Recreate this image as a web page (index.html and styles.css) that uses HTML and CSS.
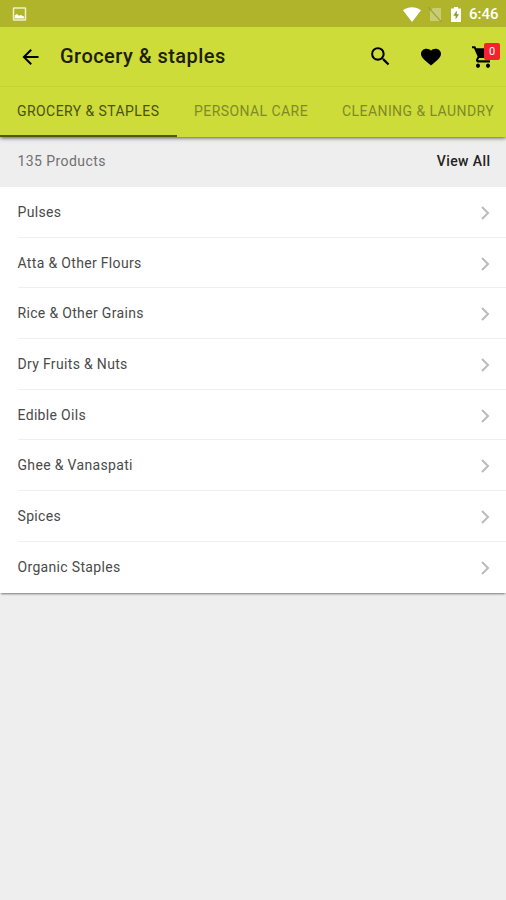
FILE: index.html
```html
<!DOCTYPE html>
<html lang="en">
<head>
<meta charset="utf-8">
<title>Grocery &amp; staples</title>
<link rel="stylesheet" href="styles.css">
</head>
<body>
<header class="header">
  <div class="status">
    <svg class="picture" viewBox="0 0 14 14"><rect x="1" y="1" width="12" height="12" rx="0.5" fill="none" stroke="#f0f0c2" stroke-width="1.5"/><path d="M2.2 11.5V8.5l2.2-1.6 2 1.8 1.9-.8 3.5 1.9v1.7z" fill="#fff"/></svg>
    <svg class="wifi" viewBox="0 0 18 15"><path d="M0 3.3C5 -.9 13 -.9 18 3.3L9 15z" fill="#fff"/></svg>
    <svg class="sim" viewBox="0 0 14 15"><path d="M5 1h8v13H2V4z" fill="#c8cc72"/><path d="M0 0l13.5 15" stroke="#979c32" stroke-width="1.1"/></svg>
    <svg class="battery" viewBox="0 0 10 15"><path d="M3 0h4v1.5h3V15H0V1.5h3z" fill="#fff"/><path d="M5.8 3.6L2.2 8.8h2.4v3.8L8 7.3H5.8z" fill="#949a20"/></svg>
    <span class="clock">6:46</span>
  </div>
  <div class="toolbar">
    <svg class="back" viewBox="0 0 24 24"><path d="M20 11H7.83l5.59-5.59L12 4l-8 8 8 8 1.41-1.41L7.83 13H20v-2z"/></svg>
    <h1 class="title">Grocery &amp; staples</h1>
    <svg class="search" viewBox="0 0 24 24"><path d="M15.5 14h-.79l-.28-.27A6.47 6.47 0 0 0 16 9.5 6.5 6.5 0 1 0 9.5 16c1.61 0 3.09-.59 4.23-1.57l.27.28v.79l5 4.99L20.49 19l-4.99-5zm-6 0C7.01 14 5 11.99 5 9.5S7.01 5 9.5 5 14 7.01 14 9.5 11.99 14 9.5 14z"/></svg>
    <svg class="heart" viewBox="0 0 24 24" preserveAspectRatio="none"><path d="M12 21.35l-1.45-1.32C5.4 15.36 2 12.28 2 8.5 2 5.42 4.42 3 7.5 3c1.74 0 3.41.81 4.5 2.09C13.09 3.81 14.76 3 16.5 3 19.58 3 22 5.42 22 8.5c0 3.78-3.4 6.86-8.55 11.54L12 21.35z"/></svg>
    <div class="cart">
      <svg class="cart-icon" viewBox="0 0 24 24" preserveAspectRatio="none"><path d="M7 18c-1.1 0-1.99.9-1.99 2S5.9 22 7 22s2-.9 2-2-.9-2-2-2zM1 2v2h2l3.6 7.59-1.35 2.45c-.16.28-.25.61-.25.96 0 1.1.9 2 2 2h12v-2H7.42c-.14 0-.25-.11-.25-.25l.03-.12.9-1.63h7.45c.75 0 1.41-.41 1.75-1.03l3.58-6.49A1 1 0 0 0 20 4H5.21l-.94-2H1zm16 16c-1.1 0-1.99.9-1.99 2s.89 2 1.99 2 2-.9 2-2-.9-2-2-2z"/></svg>
      <span class="badge">0</span>
    </div>
  </div>
  <nav class="tabs">
    <a class="tab active">GROCERY &amp; STAPLES</a>
    <a class="tab">PERSONAL CARE</a>
    <a class="tab">CLEANING &amp; LAUNDRY</a>
  </nav>
</header>
<main>
  <div class="summary"><span class="count">135 Products</span><span class="all">View All</span></div>
  <ul class="list">
    <li class="row"><span>Pulses</span><svg class="chevron" viewBox="0 0 9 14"><path d="M1 1l6 6-6 6"/></svg></li>
    <li class="row"><span>Atta &amp; Other Flours</span><svg class="chevron" viewBox="0 0 9 14"><path d="M1 1l6 6-6 6"/></svg></li>
    <li class="row"><span>Rice &amp; Other Grains</span><svg class="chevron" viewBox="0 0 9 14"><path d="M1 1l6 6-6 6"/></svg></li>
    <li class="row"><span>Dry Fruits &amp; Nuts</span><svg class="chevron" viewBox="0 0 9 14"><path d="M1 1l6 6-6 6"/></svg></li>
    <li class="row"><span>Edible Oils</span><svg class="chevron" viewBox="0 0 9 14"><path d="M1 1l6 6-6 6"/></svg></li>
    <li class="row"><span>Ghee &amp; Vanaspati</span><svg class="chevron" viewBox="0 0 9 14"><path d="M1 1l6 6-6 6"/></svg></li>
    <li class="row"><span>Spices</span><svg class="chevron" viewBox="0 0 9 14"><path d="M1 1l6 6-6 6"/></svg></li>
    <li class="row"><span>Organic Staples</span><svg class="chevron" viewBox="0 0 9 14"><path d="M1 1l6 6-6 6"/></svg></li>
  </ul>
</main>
</body>
</html>
```
FILE: styles.css
```css
* { box-sizing: border-box; }
body {
  margin: 0;
  min-height: 900px;
  overflow: hidden;
  background: #eee;
  font-family: Roboto, sans-serif;
  color: #4a4a4a;
}
svg { display: block; flex: none; }
.header {
  position: relative;
  height: 137px;
  background: #cddc39;
  box-shadow: 0 1px 4px rgba(0, 0, 0, .65);
}
.status {
  display: flex;
  align-items: center;
  height: 27px;
  padding: 1px 7px 0 12px;
  background: #afb42b;
}
.picture { width: 15px; height: 14px; }
.wifi { width: 18px; height: 15px; margin-left: auto; }
.sim { width: 14px; height: 15px; margin-left: 7px; }
.battery { width: 10px; height: 15px; margin-left: 9px; }
.clock {
  width: 30px;
  margin-left: 8px;
  color: #fff;
  font-size: 15px;
  font-weight: 500;
  white-space: nowrap;
}
.toolbar {
  display: flex;
  align-items: center;
  height: 60px;
  padding: 0 11px 0 17.5px;
  border-bottom: 1px solid #c4d336;
}
.back { width: 25px; height: 24px; }
.title {
  margin: 0 auto 2px 17.5px;
  color: #1d2005;
  font-size: 20px;
  font-weight: 500;
  letter-spacing: .47px;
  white-space: nowrap;
}
.search { width: 25px; height: 25px; }
.heart { width: 24px; height: 22px; margin: 1px 0 0 26px; }
.cart { position: relative; width: 24px; height: 26px; margin-left: 28px; }
.cart-icon { width: 24px; height: 26px; }
.badge {
  position: absolute;
  top: -1px;
  left: 13px;
  width: 16px;
  height: 17px;
  border-radius: 2px;
  background: #f5222d;
  color: #fff;
  font-size: 11px;
  line-height: 17px;
  text-align: center;
}
.tabs { display: flex; height: 50px; }
.tab {
  display: flex;
  align-items: center;
  flex: none;
  height: 50px;
  padding: 0 0 2px 17px;
  color: #7f8a27;
  font-size: 14px;
  letter-spacing: .43px;
  white-space: nowrap;
}
.active {
  width: 177px;
  padding-bottom: 0;
  border-bottom: 2px solid #515a05;
  color: #4b5212;
}
.tab:nth-child(2) { width: 148px; }
.summary {
  display: flex;
  align-items: center;
  justify-content: space-between;
  height: 50px;
  padding: 0 15.5px 2px 17.5px;
  font-size: 14px;
  letter-spacing: .42px;
}
.count { color: #707070; }
.all { color: #222; font-weight: 500; }
.list {
  margin: 0;
  padding: 0 0 0 17.5px;
  list-style: none;
  background: #fff;
  box-shadow: 0 2px 2px -1px rgba(0, 0, 0, .5);
}
.row {
  display: flex;
  align-items: center;
  justify-content: space-between;
  height: 50.7px;
  padding: 0 16px 0 0;
  border-bottom: 1px solid #efefef;
  font-size: 14px;
  letter-spacing: .33px;
}
.row:last-child { border-bottom-color: transparent; }
.chevron { width: 9px; height: 14px; margin-top: 2px; }
.chevron path { fill: none; stroke: #bbb; stroke-width: 2; }
```
